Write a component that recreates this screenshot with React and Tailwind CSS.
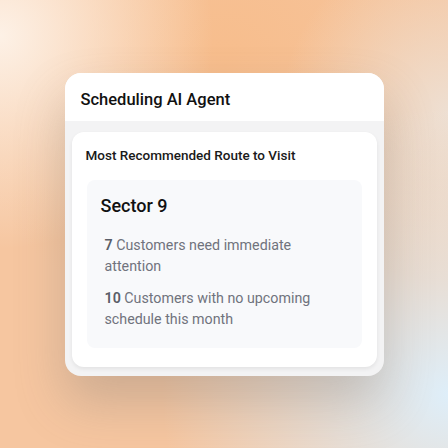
export default function App() {
  return (
    <div
      className="flex h-[448px] w-[448px] items-center justify-center overflow-hidden bg-[#f6c6a0] bg-[radial-gradient(circle_at_0%_8%,#fdf1e6_0%,rgba(253,241,230,0)_35%),radial-gradient(circle_at_100%_88%,#deeef9_0%,rgba(222,238,249,0)_48%),radial-gradient(circle_at_100%_25%,#eedfd2_0%,rgba(238,223,210,0)_30%),radial-gradient(circle_at_50%_15%,#f7bd8c_0%,rgba(247,189,140,0)_60%)]"
      style={{ fontFamily: 'Roboto, "Noto Sans", sans-serif' }}
    >
      <div className="flex h-[303px] w-[319px] flex-col overflow-hidden rounded-2xl bg-[#f3f3f4] shadow-[0_26px_50px_rgba(110,110,110,0.3)]">
        <div className="flex h-12 items-center bg-white px-4">
          <h1 className="pt-[7px] text-[16.5px] font-medium text-[#111]">Scheduling AI Agent</h1>
        </div>
        <div className="flex-1 px-[7px] pb-[9px] pt-[11px]">
          <div className="flex h-full flex-col rounded-xl bg-white px-[15px] pt-[14px] pb-[19px] shadow-[0_2px_4px_rgba(0,0,0,0.07)]">
            <h2 className="-ml-px text-[13.5px] leading-[18px] font-medium text-[#1a1a1a]">Most Recommended Route to Visit</h2>
            <div className="mt-[16px] flex-1 rounded-lg bg-[#f8f9fb] px-[14px] pt-[14px]">
              <h3 className="text-[18px] leading-[24px] font-medium text-[#111]">Sector 9</h3>
              <div className="mt-[17px] flex w-[232px] flex-col gap-[11px] pl-1 text-[14.25px] leading-[21px] text-[#70737d]">
                <p>
                  <span className="font-semibold text-[#5a5e68]">7</span> Customers need immediate attention
                </p>
                <p>
                  <span className="font-semibold text-[#5a5e68]">10</span> Customers with no upcoming schedule this month
                </p>
              </div>
            </div>
          </div>
        </div>
      </div>
    </div>
  );
}
